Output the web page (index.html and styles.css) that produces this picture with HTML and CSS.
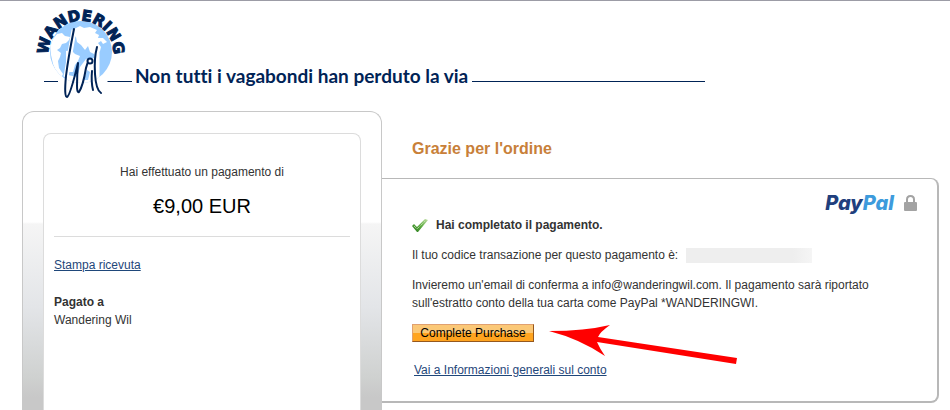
FILE: index.html
```html
<!DOCTYPE html>
<html lang="it">
<head>
<meta charset="utf-8">
<title>Grazie per l'ordine</title>
<link rel="stylesheet" href="styles.css">
</head>
<body>
<header class="masthead">
  <svg class="logo" viewBox="36 0 96 100" role="img" aria-label="Wandering Wil">
    <defs>
      <path id="arc" d="M50 62A32.500 32.500 0 1 1 112 62"/>
      <clipPath id="disc"><circle cx="81" cy="51" r="31"/></clipPath>
    </defs>
    <g clip-path="url(#disc)">
      <rect x="50" y="20" width="62" height="62" fill="#9cf"/>
      <path fill="#fff" d="M53 38L57 33L62 32L65 35L70 36L69 39L66 42L62 43L60 47L57 49L61 52L60 56L58 60L59 67L63 73L61 77L56 70L53 63L51 54L50 45ZM74 28L80 25L84 27L90 26L97 29L95 32L99 34L98 37L103 37L107 41L103 43L101 40L98 42L101 46L100 50L96 54L90 51L88 45L85 49L81 44L77 41L76 36L72 33ZM66 50L71 49L75 53L80 55L78 60L75 64L73 71L68 71L66 62ZM80 66L86 58L94 57L99 66L96 76L99 84L63 84L68 74L77 76Z"/>
      <path fill="#9cf" d="M87 69L90 71L88 79L84 79Z"/>
      <path class="halo" d="M74 29L66 76M97 47L97 85"/>
    </g>
    <text class="logo-ring"><textPath href="#arc" startOffset="50%" text-anchor="middle">WANDERING</textPath></text>
    <g class="pen">
      <path d="M44 80.500H58M107.500 80.500H132"/>
      <path class="ink" d="M74 28Q68 58 66 75Q64 96 67 96Q70 95 78 62M78 62Q77 75 77 85Q77 92 79 91Q83 85 86 67Q87 62 89 60M92 70Q91 81 93 89M97 46Q94 57 95 73Q96 89 101 92"/>
      <circle class="dot" cx="90" cy="60" r="2.500"/>
    </g>
  </svg>
  <p class="tagline">Non tutti i vagabondi han perduto la via</p>
  <span class="rule"></span>
</header>
<main class="checkout">
  <aside class="summary">
    <div class="receipt">
      <div class="total">
        <p>Hai effettuato un pagamento di</p>
        <p class="amount">€9,00 EUR</p>
      </div>
      <p><a href="#receipt">Stampa ricevuta</a></p>
      <div class="payee">
        <strong>Pagato a</strong>
        <p>Wandering Wil</p>
      </div>
    </div>
  </aside>
  <section class="result">
    <h1>Grazie per l'ordine</h1>
    <div class="panel">
      <div class="brand">
        <span class="paypal">Pay<span class="pal">Pal</span></span>
        <svg class="lock" viewBox="0 0 13 17" aria-hidden="true">
          <path d="M3 8V4.500Q3 1 6.500 1T10 4.500V8" fill="none" stroke="#a3a3a3" stroke-width="2"/>
          <rect y="7" width="13" height="9" rx="1" fill="#a3a3a3"/>
        </svg>
      </div>
      <div class="details">
        <h2>
          <svg class="check" viewBox="0 0 16 13" aria-hidden="true">
            <defs><linearGradient id="leaf" x1="1" y1="0" x2="0" y2="1"><stop offset="0" stop-color="#c3e0a6"/><stop offset=".5" stop-color="#5cab40"/><stop offset="1" stop-color="#27781d"/></linearGradient></defs>
            <path d="M0 7L2 5L5 8L13 0L16 1L6 13H5Z" fill="url(#leaf)"/>
            <path d="M2 7L5 10L13 2" fill="none" stroke="#d5eac2" stroke-dasharray="1 1"/>
          </svg>
          Hai completato il pagamento.
        </h2>
        <p>Il tuo codice transazione per questo pagamento è: <span class="redacted"></span></p>
        <p>Invieremo un'email di conferma a info@wanderingwil.com. Il pagamento sarà riportato sull'estratto conto della tua carta come PayPal *WANDERINGWI.</p>
        <div class="action">
          <button type="button">Complete Purchase</button>
          <svg class="arrow" viewBox="548 324 190 42" aria-hidden="true">
            <path fill="#f00" d="M549 331Q585 331 610 325Q600 332 598 337L737 358L736 364L597 342Q600 349 605 356Q580 339 549 331Z"/>
          </svg>
        </div>
        <p class="account"><a href="#account">Vai a Informazioni generali sul conto</a></p>
      </div>
    </div>
  </section>
</main>
</body>
</html>
```
FILE: styles.css
```css
* { box-sizing: border-box; }

body {
  margin: 0;
  min-height: 100vh;
  display: flex;
  flex-direction: column;
  border-top: 1px solid #9c9ca6;
  background: #fff;
  color: #333;
  font: 12px/18px "Liberation Sans", Arial, sans-serif;
}

h1, h2, p { margin: 0; }
a { color: #1f477a; }

.masthead {
  display: flex;
  align-items: flex-start;
  padding-left: 36px;
  height: 110px;
}

.logo { width: 96px; height: 100px; flex: none; overflow: visible; }

.logo-ring {
  fill: #002356;
  stroke: #002356;
  stroke-width: 1;
  font: 700 15px "DejaVu Sans", sans-serif;
}

.halo { fill: none; stroke: #fff; stroke-width: 5; }
.pen { fill: none; stroke: #002356; stroke-width: 1; }
.ink { stroke-width: 2; stroke-linecap: round; stroke-linejoin: round; }
.dot { stroke-width: 2; fill: #fff; }

.tagline {
  margin: 63px 4px 0 3px;
  color: #002356;
  font: 700 19px/24px Lato, sans-serif;
  font-variant-ligatures: none;
  white-space: nowrap;
}

.rule {
  width: 233px;
  margin-top: 80px;
  border-top: 1px solid #002356;
}

.checkout {
  flex: 1;
  display: grid;
  grid-template-columns: 360px 1fr;
  padding: 0 11px 0 22px;
}

.summary {
  display: flex;
  padding: 21px 20px 0;
  border: 1px solid #c8c8c8;
  border-bottom: 0;
  border-radius: 12px 12px 0 0;
  background: linear-gradient(#fff 110px, #f5f5f5 112px, #e3e5e8 195px, #cfd1d0 265px, #c8c8c8 285px);
}

.receipt {
  flex: 1;
  display: flex;
  flex-direction: column;
  gap: 19px;
  padding: 29px 10px 0;
  border: 1px solid #dcdcdc;
  border-bottom: 0;
  border-radius: 8px 8px 0 0;
  background: #fff;
}

.total {
  padding-bottom: 18px;
  border-bottom: 1px solid #dcdcdc;
  text-align: center;
}

.amount {
  margin-top: 13px;
  color: #000;
  font-size: 20px;
  line-height: 24px;
}

.result { padding-top: 28px; }

h1 {
  padding-left: 30px;
  color: #c88039;
  font-size: 16px;
  line-height: 20px;
}

.panel {
  margin-top: 19px;
  padding: 16px 20px 22px 30px;
  border: solid #b8b8b8;
  border-width: 1px 2px 2px 0;
  border-radius: 0 8px 8px 0;
}

.brand {
  display: flex;
  justify-content: flex-end;
  gap: 10px;
  height: 21px;
}

.paypal {
  color: #213f7d;
  font: italic 800 20px/16px Inter, sans-serif;
}

.pal { color: #3d9bdc; }
.lock { width: 13px; height: 17px; }

.details {
  display: flex;
  flex-direction: column;
  gap: 12px;
  max-width: 480px;
}

h2 {
  display: flex;
  align-items: center;
  gap: 8px;
  font-size: 12px;
}

.check { width: 16px; height: 13px; }

.redacted {
  display: inline-block;
  width: 126px;
  height: 15px;
  margin-left: 4px;
  vertical-align: middle;
  background: linear-gradient(90deg, #eee 85%, #f5f5f5);
}

.action { position: relative; display: flex; }

button {
  width: 122px;
  height: 18px;
  padding: 0;
  border: 1px solid;
  border-color: #e0a070 #95581f #95581f #e0a070;
  background: linear-gradient(#fbc877 50%, #ffa41f 50%);
  color: #000;
  font: inherit;
  line-height: 16px;
}

.arrow {
  position: absolute;
  left: 136px;
  top: 0;
  width: 190px;
  height: 42px;
}

.account { padding: 7px 2px 0; }
```
